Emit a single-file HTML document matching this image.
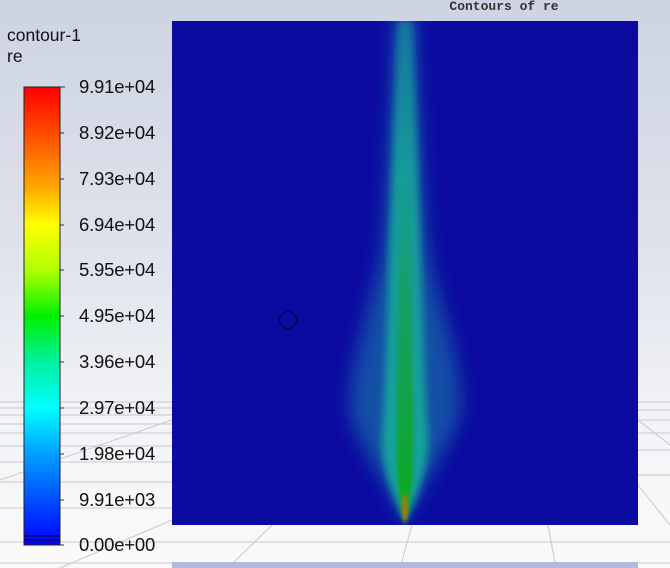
<!DOCTYPE html>
<html><head><style>
html,body{margin:0;padding:0;width:670px;height:568px;overflow:hidden}
body{position:relative;background:linear-gradient(to bottom,#cdd3e2 0%,#dfe3ec 45%,#f3f4f7 75%,#fafafa 100%);font-family:"Liberation Sans",sans-serif}
.t{position:absolute;left:79px;font-size:18.5px;color:#111;line-height:20px;letter-spacing:-0.2px}
.ti{position:absolute;left:7px;font-size:17.5px;color:#111}
</style></head><body>
<svg width="670" height="568" style="position:absolute;left:0;top:0">
<defs>
<linearGradient id="cb" x1="0" y1="0" x2="0" y2="1">
<stop offset="0" stop-color="#ff0000"/>
<stop offset="0.1" stop-color="#ff4a00"/>
<stop offset="0.22" stop-color="#ffa800"/>
<stop offset="0.3" stop-color="#ffff00"/>
<stop offset="0.4" stop-color="#b0ff00"/>
<stop offset="0.5" stop-color="#00f000"/>
<stop offset="0.6" stop-color="#00f0a0"/>
<stop offset="0.7" stop-color="#00ffff"/>
<stop offset="0.8" stop-color="#00a0ff"/>
<stop offset="0.9" stop-color="#0050ff"/>
<stop offset="1" stop-color="#0000ff"/>
</linearGradient>
<linearGradient id="core" x1="0" y1="0" x2="0" y2="1">
<stop offset="0" stop-color="#14a040" stop-opacity="0"/>
<stop offset="0.35" stop-color="#14a040" stop-opacity="0.6"/>
<stop offset="1" stop-color="#10a818" stop-opacity="1"/>
</linearGradient>
<linearGradient id="teal" x1="0" y1="0" x2="0" y2="1">
<stop offset="0" stop-color="#1575a0"/>
<stop offset="0.3" stop-color="#139a9c"/>
<stop offset="1" stop-color="#12a49a"/>
</linearGradient>
<filter id="b8" x="-50%" y="-10%" width="200%" height="120%"><feGaussianBlur stdDeviation="9"/></filter>
<filter id="b5" x="-50%" y="-10%" width="200%" height="120%"><feGaussianBlur stdDeviation="4"/></filter>
<filter id="b2" x="-50%" y="-10%" width="200%" height="120%"><feGaussianBlur stdDeviation="1.8"/></filter>
<clipPath id="cp"><rect x="172" y="21" width="466" height="504"/></clipPath>
</defs>
<g stroke="#c8c8cc" stroke-width="1" fill="none">
<line x1="0" y1="402" x2="172" y2="402"/><line x1="0" y1="408" x2="172" y2="408"/><line x1="0" y1="415" x2="172" y2="415"/>
<line x1="0" y1="424" x2="172" y2="424"/><line x1="0" y1="433" x2="172" y2="433"/><line x1="0" y1="446" x2="172" y2="446"/>
<line x1="0" y1="462" x2="172" y2="462"/><line x1="0" y1="482" x2="172" y2="482"/><line x1="0" y1="508" x2="172" y2="508"/>
<line x1="638" y1="402" x2="670" y2="402"/><line x1="638" y1="410" x2="670" y2="410"/><line x1="638" y1="420" x2="670" y2="420"/>
<line x1="638" y1="433" x2="670" y2="433"/><line x1="638" y1="450" x2="670" y2="450"/><line x1="638" y1="475" x2="670" y2="475"/>
<line x1="0" y1="542" x2="670" y2="542"/><line x1="0" y1="563" x2="670" y2="563"/>
<line x1="172" y1="420" x2="0" y2="480"/><line x1="172" y1="520" x2="60" y2="568"/>
<line x1="272" y1="525" x2="228" y2="568"/><line x1="412" y1="525" x2="400" y2="568"/><line x1="548" y1="525" x2="556" y2="568"/>
<line x1="638" y1="485" x2="670" y2="525"/><line x1="638" y1="420" x2="670" y2="445"/>
</g>
<rect x="172" y="562" width="466" height="6" fill="#b4b8dc"/>
<g clip-path="url(#cp)">
<rect x="172" y="21" width="466" height="504" fill="#0c0ba0"/>
<path d="M405 520 C 380 470,345 430,350 395 C 355 350,372 300,382 250 C 390 150,393 60,395 15 L415 15 C 417 60,420 150,428 250 C 438 300,458 350,460 395 C 465 430,430 470,405 520Z" fill="#1660a8" opacity="0.8" filter="url(#b8)"/>
<path d="M405 522 C 390 490,378 460,383 420 C 386 360,388 280,391 200 C 394 120,396 60,398 20 L412 20 C 414 60,416 120,419 200 C 422 280,424 360,427 420 C 432 460,420 490,405 522Z" fill="url(#teal)" filter="url(#b5)"/>
<path d="M405 524 C 397 500,396 460,397 400 C 398 330,399 260,400 180 L410 180 C 411 260,412 330,413 400 C 414 460,413 500,405 524Z" fill="url(#core)" filter="url(#b2)"/>
<path d="M405 524 C 402 515,402 505,403.5 495 L406.5 495 C 408 505,408 515,405 524Z" fill="#c07010" filter="url(#b2)"/>
<circle cx="288" cy="320" r="8.5" fill="none" stroke="#000" stroke-width="1" stroke-dasharray="2 1"/>
</g>
<rect x="24" y="87" width="36" height="458" fill="url(#cb)" stroke="#222" stroke-width="1"/>
<line x1="24" y1="536" x2="60" y2="536" stroke="#001" stroke-width="1"/>
<line x1="24" y1="540" x2="60" y2="540" stroke="#001" stroke-width="1"/>
<g stroke="#333" stroke-width="1">
<line x1="60" y1="87" x2="65" y2="87"/><line x1="60" y1="133" x2="64" y2="133"/><line x1="60" y1="179" x2="64" y2="179"/>
<line x1="60" y1="225" x2="64" y2="225"/><line x1="60" y1="270" x2="64" y2="270"/><line x1="60" y1="316" x2="64" y2="316"/>
<line x1="60" y1="362" x2="64" y2="362"/><line x1="60" y1="408" x2="64" y2="408"/><line x1="60" y1="454" x2="64" y2="454"/>
<line x1="60" y1="500" x2="64" y2="500"/><line x1="60" y1="545" x2="64" y2="545"/>
</g>
<text x="504" y="10" font-family="Liberation Mono,monospace" font-size="13" font-weight="bold" fill="#333" text-anchor="middle">Contours of re</text>
</svg>
<div class="ti" style="top:25px">contour-1</div>
<div class="ti" style="top:46px">re</div>
<div class="t" style="top:77px">9.91e+04</div>
<div class="t" style="top:123px">8.92e+04</div>
<div class="t" style="top:169px">7.93e+04</div>
<div class="t" style="top:215px">6.94e+04</div>
<div class="t" style="top:260px">5.95e+04</div>
<div class="t" style="top:306px">4.95e+04</div>
<div class="t" style="top:352px">3.96e+04</div>
<div class="t" style="top:398px">2.97e+04</div>
<div class="t" style="top:444px">1.98e+04</div>
<div class="t" style="top:490px">9.91e+03</div>
<div class="t" style="top:535px">0.00e+00</div>
</body></html>
